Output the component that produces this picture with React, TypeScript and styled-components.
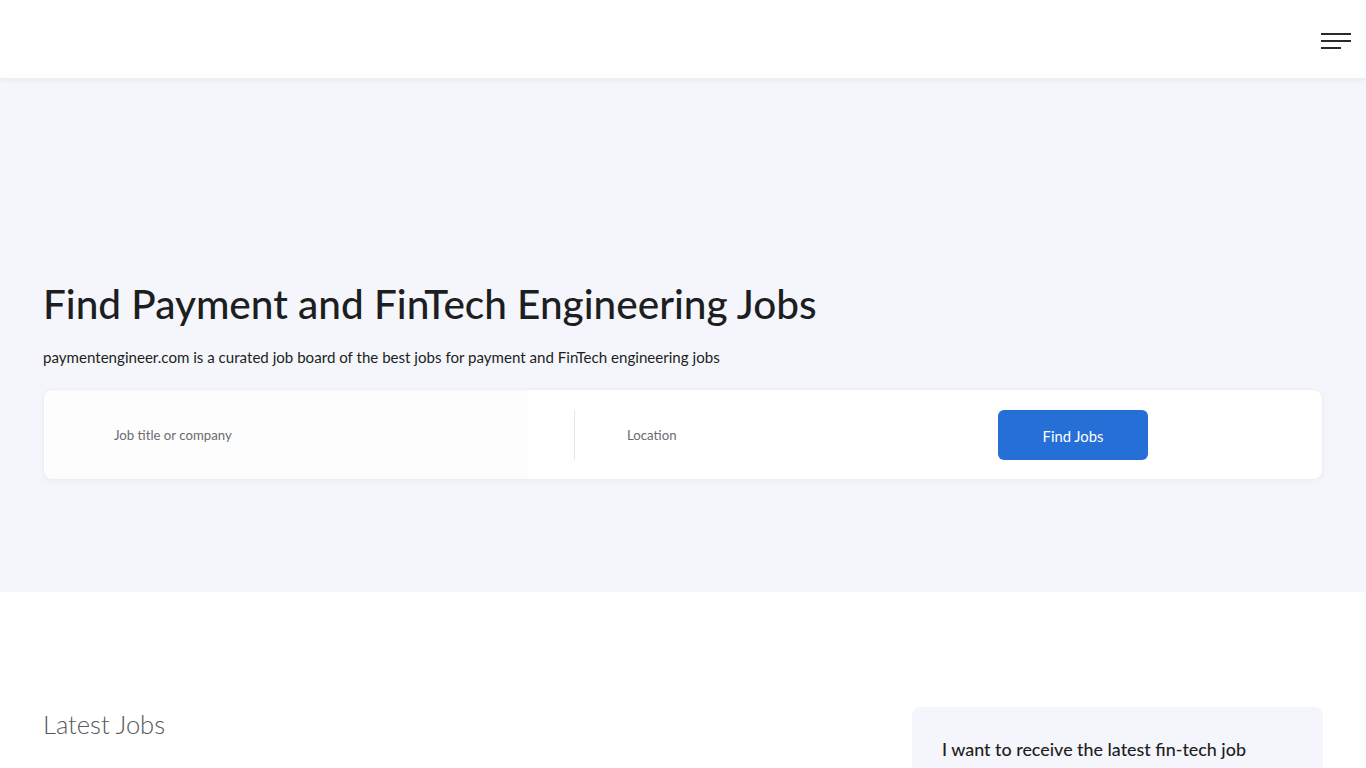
import React from 'react';
import styled, { createGlobalStyle } from 'styled-components';

const GlobalStyle = createGlobalStyle`
  html, body {
    margin: 0;
    padding: 0;
    background: #ffffff;
    font-family: Lato, "Noto Sans", sans-serif;
    color: #1f2024;
  }
  * {
    box-sizing: border-box;
  }
`;

const Header = styled.header`
  position: relative;
  z-index: 2;
  height: 78px;
  background: #ffffff;
  box-shadow: 0 2px 6px rgba(30, 40, 80, 0.06);
  display: flex;
  align-items: center;
  justify-content: flex-end;
  padding: 0 15px 0 0;
`;

const MenuButton = styled.button`
  width: 30px;
  height: 30px;
  padding: 0;
  border: 0;
  background: none;
  display: flex;
  flex-direction: column;
  justify-content: center;
  gap: 5px;
  cursor: pointer;
  margin-top: 4px;
`;

const MenuLine = styled.span<{ $short?: boolean }>`
  display: block;
  height: 2px;
  width: ${(p) => (p.$short ? '20px' : '30px')};
  background: #2a2a2e;
`;

const Hero = styled.section`
  background: #f5f6fb;
  height: 514px;
  padding: 200px 43px 0;
`;

const Title = styled.h1`
  margin: 0;
  font-size: 40.5px;
  font-weight: 500;
  line-height: 52px;
  color: #1d1e22;
`;

const Lead = styled.p`
  margin: 16px 0 0;
  font-size: 15.1px;
  line-height: 22px;
  color: #1d1e22;
`;

const SearchBox = styled.form`
  margin-top: 21px;
  height: 91px;
  background: #ffffff;
  border: 1px solid #eceef4;
  border-radius: 10px;
  box-shadow: 0 2px 6px rgba(30, 40, 80, 0.04);
  display: flex;
  align-items: center;
  overflow: hidden;
`;

const Field = styled.div<{ $width: number; $tint?: boolean }>`
  width: ${(p) => p.$width}px;
  height: 100%;
  display: flex;
  align-items: center;
  background: ${(p) => (p.$tint ? '#fdfdfe' : 'transparent')};
`;

const Input = styled.input<{ $indent: number }>`
  border: 0;
  outline: none;
  background: transparent;
  font-family: inherit;
  font-size: 13.2px;
  color: #333;
  padding-left: ${(p) => p.$indent}px;
  width: 100%;

  &::placeholder {
    color: #6b6b70;
  }
`;

const Divider = styled.div`
  width: 1px;
  height: 50px;
  background: #e4e5ea;
  margin-left: 46px;
`;

const FindButton = styled.button`
  width: 150px;
  height: 50px;
  border: 0;
  border-radius: 6px;
  background: #256fd6;
  color: #ffffff;
  font-family: inherit;
  font-size: 14.8px;
  padding-top: 4px;
  cursor: pointer;
`;

const Main = styled.main`
  display: flex;
  justify-content: space-between;
  padding: 115px 43px 0;
`;

const SectionTitle = styled.h2`
  margin: 0;
  font-size: 25.5px;
  font-weight: 300;
  line-height: 34px;
  color: #55575c;
`;

const AlertCard = styled.aside`
  width: 411px;
  min-height: 200px;
  background: #f5f6fb;
  border-radius: 8px;
  padding: 28px 30px;
`;

const AlertTitle = styled.h3`
  margin: 0;
  font-size: 17.9px;
  font-weight: 500;
  line-height: 28px;
  color: #1d1e22;
`;

export default function App() {
  return (
    <>
      <GlobalStyle />
      <Header>
        <MenuButton type="button" aria-label="Menu">
          <MenuLine />
          <MenuLine />
          <MenuLine $short />
        </MenuButton>
      </Header>
      <Hero>
        <Title>Find Payment and FinTech Engineering Jobs</Title>
        <Lead>
          paymentengineer.com is a curated job board of the best jobs for payment and FinTech engineering jobs
        </Lead>
        <SearchBox onSubmit={(e) => e.preventDefault()}>
          <Field $width={484} $tint>
            <Input $indent={70} placeholder="Job title or company" />
          </Field>
          <Divider />
          <Field $width={423}>
            <Input $indent={52} placeholder="Location" />
          </Field>
          <FindButton type="submit">Find Jobs</FindButton>
        </SearchBox>
      </Hero>
      <Main>
        <SectionTitle>Latest Jobs</SectionTitle>
        <AlertCard>
          <AlertTitle>I want to receive the latest fin-tech job alerts</AlertTitle>
        </AlertCard>
      </Main>
    </>
  );
}
